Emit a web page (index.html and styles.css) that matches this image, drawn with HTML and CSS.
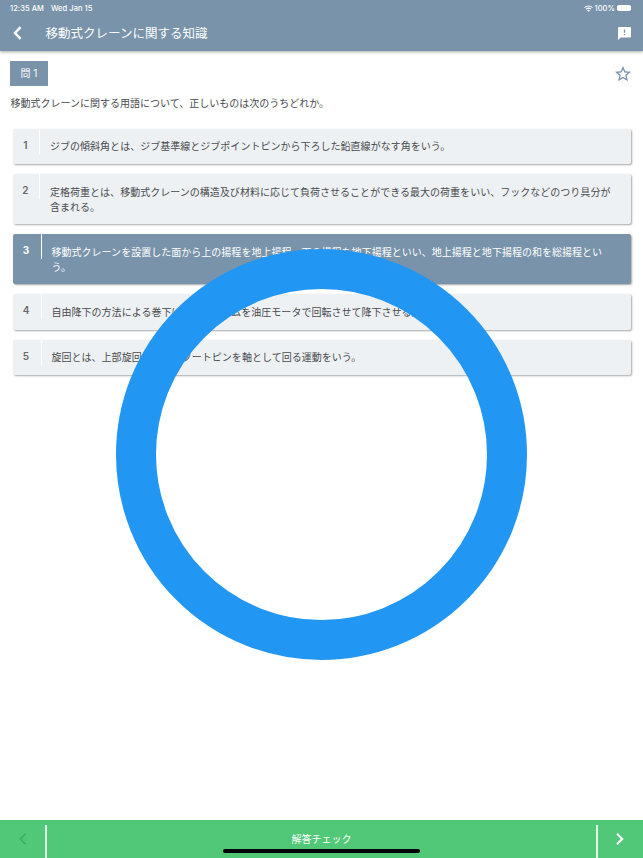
FILE: index.html
```html
<!DOCTYPE html>
<html lang="ja">
<head>
  <meta charset="UTF-8">
  <meta name="viewport" content="width=device-width, initial-scale=1.0">
  <title>移動式クレーンに関する知識</title>
  <link rel="stylesheet" href="styles.css">
</head>
<body>
  <!-- ヘッダー -->
  <header class="header">
    <div class="status">
      <span>12:35 AM</span>
      <span class="date">Wed Jan 15</span>
      <svg class="wifi" width="9" height="7" viewBox="0 0 18 14" fill="none" stroke="#fff" stroke-width="2.2">
        <path d="M1 5.2a11.5 11.5 0 0 1 16 0M4 8.4a7 7 0 0 1 10 0"/>
        <path d="M9 13.5 6.2 10.8a4 4 0 0 1 5.6 0z" fill="#fff" stroke="none"/>
      </svg>
      <span class="percent">100%</span>
      <span class="battery"></span>
    </div>
    <div class="title-bar">
      <svg class="back" width="9" height="14" viewBox="0 0 9 14" fill="none" stroke="#fff" stroke-width="2.4">
        <path d="M7.6 1.2 2 7l5.6 5.8"/>
      </svg>
      <h1 class="title">移動式クレーンに関する知識</h1>
      <svg class="feedback" width="13" height="13" viewBox="0 0 13 13">
        <path d="M1 0h11q1 0 1 1v8.4q0 1-1 1H2.6L0 13V1q0-1 1-1z" fill="#fff"/>
        <path d="M6.5 2.5v3.3M6.5 7v1.3" stroke="#7893aa" stroke-width="1.3"/>
      </svg>
    </div>
  </header>

  <!-- 問題 -->
  <main class="main">
    <div class="question-head">
      <span class="label">問 1</span>
      <svg class="star" width="16" height="16" viewBox="2 2 20 20" fill="#7893aa">
        <path d="M22 9.24l-7.19-.62L12 2 9.19 8.63 2 9.24l5.46 4.73L5.82 21 12 17.27 18.18 21l-1.63-7.03L22 9.24zM12 15.4l-3.76 2.27 1-4.28-3.32-2.88 4.38-.38L12 6.1l1.71 4.04 4.38.38-3.32 2.88 1 4.28L12 15.4z"/>
      </svg>
    </div>
    <p class="question">移動式クレーンに関する用語について、正しいものは次のうちどれか。</p>

    <!-- 選択肢 -->
    <ul class="choices">
      <li class="choice first">
        <span class="number">1</span>
        <p class="text">ジブの傾斜角とは、ジブ基準線とジブポイントピンから下ろした鉛直線がなす角をいう。</p>
      </li>
      <li class="choice second">
        <span class="number">2</span>
        <p class="text">定格荷重とは、移動式クレーンの構造及び材料に応じて負荷させることができる最大の荷重をいい、フックなどのつり具分が含まれる。</p>
      </li>
      <li class="choice selected">
        <span class="number">3</span>
        <p class="text">移動式クレーンを設置した面から上の揚程を地上揚程、下の揚程を地下揚程といい、地上揚程と地下揚程の和を総揚程という。</p>
      </li>
      <li class="choice">
        <span class="number">4</span>
        <p class="text">自由降下の方法による巻下げとは、ドラムを油圧モータで回転させて降下させる方法をいう。</p>
      </li>
      <li class="choice">
        <span class="number">5</span>
        <p class="text">旋回とは、上部旋回体がジブフートピンを軸として回る運動をいう。</p>
      </li>
    </ul>
  </main>

  <!-- 正解の丸 -->
  <div class="correct"></div>

  <!-- フッター -->
  <footer class="footer">
    <div class="prev">
      <svg width="8" height="12" viewBox="0 0 8 12" fill="none" stroke="#3fae63" stroke-width="1.8">
        <path d="M6.5 .8 1.5 6l5 5.2"/>
      </svg>
    </div>
    <div class="check">解答チェック</div>
    <div class="next">
      <svg width="8" height="12" viewBox="0 0 8 12" fill="none" stroke="#fff" stroke-width="2.1">
        <path d="M1 .8 6.2 6 1 11.2"/>
      </svg>
    </div>
    <span class="home-bar"></span>
  </footer>
</body>
</html>
```

FILE: styles.css
```css
/* 全体の設定 */
* {
  box-sizing: border-box;
}
body {
  margin: 0;
  height: 858px;
  display: flex;
  flex-direction: column;
  position: relative;
  overflow: hidden;
  background-color: #fff;
  color: #484b4e;
  font-family: "Inter", "Noto Sans CJK JP", sans-serif;
  font-size: 10px;
}
svg {
  display: block;
}
/* ヘッダー */
.header {
  height: 51px;
  background-color: #7893aa;
  color: #fff;
  box-shadow: 0 1px 3px rgba(0, 0, 0, 0.35);
}
.status {
  display: flex;
  align-items: center;
  height: 16px;
  padding: 0 12px 0 10px;
  font-size: 7.5px;
  font-weight: 500;
  letter-spacing: 0.05px;
}
.date {
  margin-left: 7px;
}
.wifi {
  margin-left: auto;
}
.percent {
  margin: 0 2px;
}
.battery {
  width: 14px;
  height: 6px;
  border-radius: 2px;
  background-color: #fff;
}
.title-bar {
  display: flex;
  align-items: center;
  height: 34px;
  padding: 0 12px 0 13px;
}
.title {
  margin: -1px 0 0 23.5px;
  font-size: 12.5px;
  font-weight: 400;
}
.feedback {
  margin-left: auto;
}
/* 問題 */
.main {
  flex: 1;
  padding: 10px 12px 0 10px;
}
.question-head {
  display: flex;
  justify-content: space-between;
  align-items: center;
  height: 25px;
}
.label {
  width: 38px;
  height: 25px;
  background-color: #7893aa;
  color: #fff;
  line-height: 25px;
  text-align: center;
}
.question {
  margin: 10px 0 17.5px 0.5px;
  line-height: 15px;
}
/* 選択肢 */
.choices {
  display: flex;
  flex-direction: column;
  gap: 10px;
  margin: 0;
  padding: 0 0 0 2.5px;
  list-style: none;
}
.choice {
  display: flex;
  align-items: flex-start;
  min-height: 35.3px;
  padding-bottom: 9.5px;
  border-radius: 2px;
  background-color: #eef1f4;
  box-shadow: 1px 1px 2px rgba(0, 0, 0, 0.35);
}
.number {
  width: 29px;
  height: 25px;
  padding-right: 1px;
  border-right: 1px solid #fff;
  color: #66696c;
  font-weight: 600;
  line-height: 33px;
  text-align: center;
}
.text {
  flex: 1;
  margin: 0;
  padding: 10.8px 15px 0 10px;
  line-height: 15px;
  letter-spacing: 0.02px;
}
.first .number,
.second .number {
  width: 27.5px;
}
.selected {
  background-color: #7893aa;
  color: #fff;
}
.selected .number {
  color: #fff;
  font-weight: 700;
}
/* 正解の丸 */
.correct {
  position: absolute;
  top: 249px;
  left: 116px;
  width: 411px;
  height: 411px;
  border: 40.5px solid #2196f3;
  border-radius: 50%;
}
/* フッター */
.footer {
  position: relative;
  display: flex;
  height: 38px;
  padding-top: 5px;
  background-color: #50c878;
  color: #fff;
}
.prev, .next {
  display: flex;
  justify-content: center;
  width: 47px;
  padding-top: 8px;
}
.prev {
  border-right: 2px solid #e3f7e9;
}
.next {
  padding-right: 2px;
  border-left: 2px solid #e3f7e9;
}
.check {
  flex: 1;
  line-height: 28px;
  text-align: center;
}
.home-bar {
  position: absolute;
  bottom: 5px;
  left: 223px;
  width: 197px;
  height: 4px;
  border-radius: 2px;
  background-color: #000;
}
```
